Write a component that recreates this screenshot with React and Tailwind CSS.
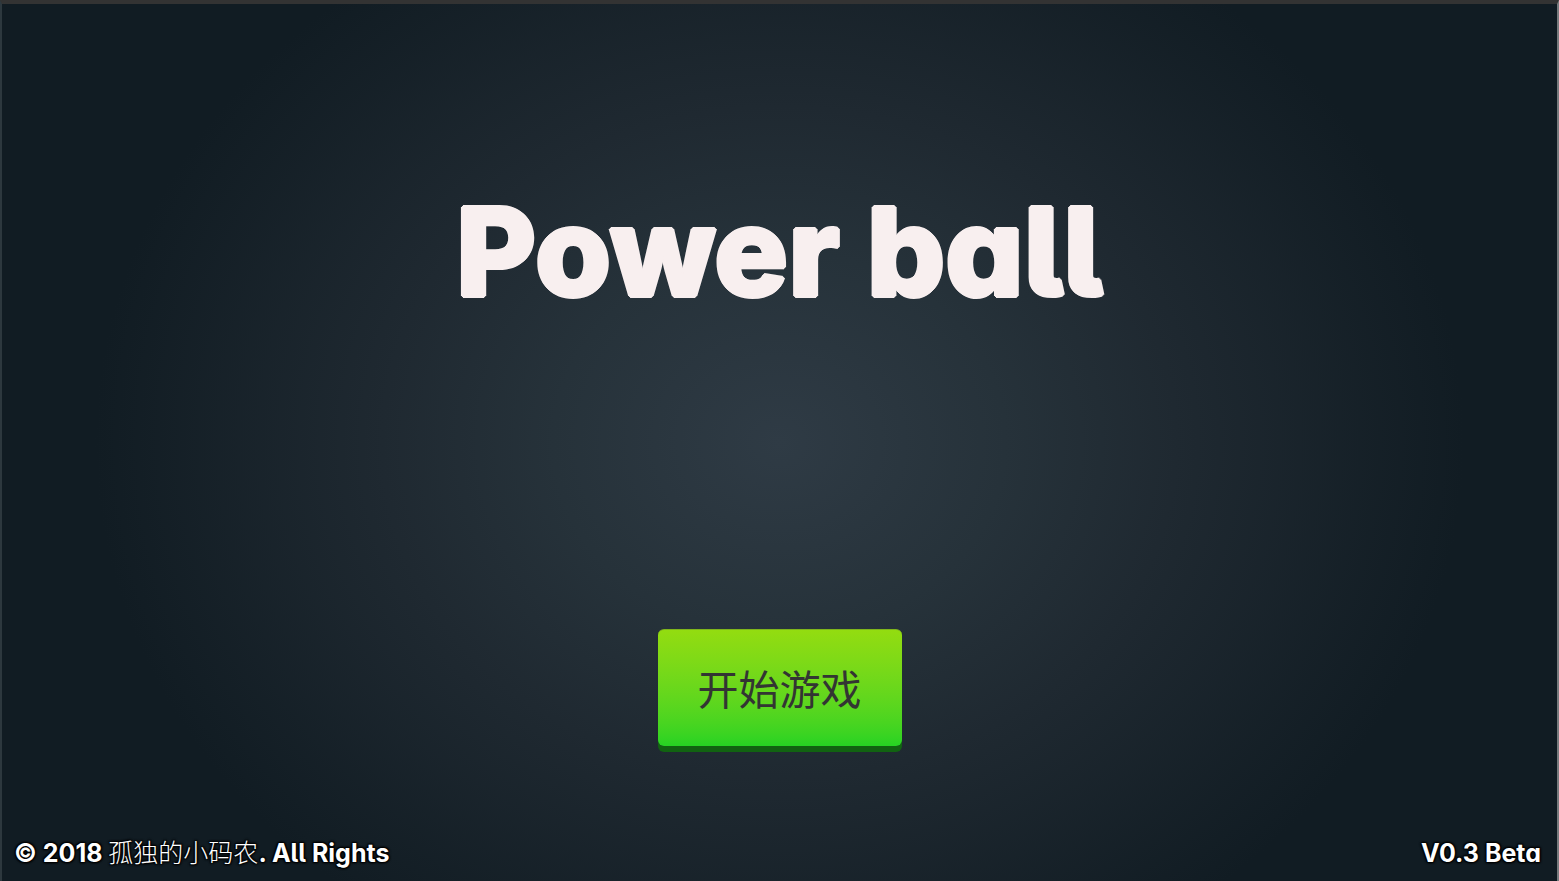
import { useState } from 'react';

const footerText = 'text-[25px] leading-8 font-bold text-white [text-shadow:1px_1px_2px_#000,-1px_-1px_2px_#000,1px_-1px_2px_#000,-1px_1px_2px_#000]';

function Title() {
    return (
        <h1 className="text-center text-[123px] leading-[144px] font-extrabold text-[#f8efef] [text-shadow:2px_0_#f8efef,-2px_0_#f8efef,0_2px_#f8efef,0_-2px_#f8efef,1px_1px_#f8efef,-1px_-1px_#f8efef,1px_-1px_#f8efef,-1px_1px_#f8efef]">
            Power ball
        </h1>
    );
}

function StartButton({ onClick }) {
    return (
        <button
            type="button"
            onClick={onClick}
            className="cursor-pointer rounded-md border-t border-[#7fb51c] bg-linear-to-b from-[#93dc10] to-[#25d323] px-10 pt-8 pb-7 text-[41px] leading-14 font-normal text-[#333533] shadow-[0_6px_0_#116311] active:translate-y-1"
        >
            开始游戏
        </button>
    );
}

export default function App() {
    const [started, setStarted] = useState(false);

    // cv11 and cv05 switch Inter to the single-storey "a" and the tailed "l"
    return (
        <div className="flex min-h-screen flex-col border-t-4 border-r-2 border-l-2 border-t-[#333333] border-r-[#777b7e] border-l-[#2d383e] bg-[#111c23] bg-[radial-gradient(44%_66%_at_center,#2f3b45_0%,#26323a_33%,#1f2931_58%,#111c23_100%)] font-['Inter','Noto_Sans_CJK_SC',sans-serif] [font-feature-settings:'cv11','cv05']">
            <main className="flex flex-1 flex-col items-center justify-between pt-44 pb-[91px]">
                <Title />
                {!started && <StartButton onClick={() => setStarted(true)} />}
            </main>
            <footer className="flex items-center justify-between pr-4 pl-3 pb-3">
                <p className={footerText}>
                    © 2018 <span className="font-light">孤独的小码农</span>. All Rights
                </p>
                <p className={footerText}>V0.3 Beta</p>
            </footer>
        </div>
    );
}
